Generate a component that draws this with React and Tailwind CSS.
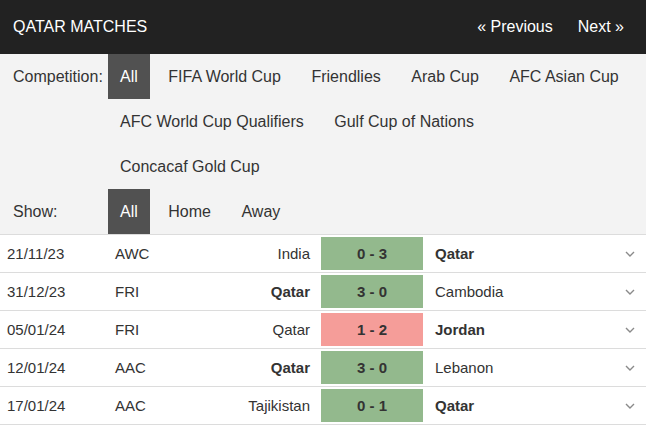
const competitions = [
  "All",
  "FIFA World Cup",
  "Friendlies",
  "Arab Cup",
  "AFC Asian Cup",
  "AFC World Cup Qualifiers",
  "Gulf Cup of Nations",
  "Concacaf Gold Cup",
]

const matches = [
  { date: "21/11/23", comp: "AWC", home: "India", away: "Qatar", score: "0 - 3", win: true, homeBold: false },
  { date: "31/12/23", comp: "FRI", home: "Qatar", away: "Cambodia", score: "3 - 0", win: true, homeBold: true },
  { date: "05/01/24", comp: "FRI", home: "Qatar", away: "Jordan", score: "1 - 2", win: false, homeBold: false },
  { date: "12/01/24", comp: "AAC", home: "Qatar", away: "Lebanon", score: "3 - 0", win: true, homeBold: true },
  { date: "17/01/24", comp: "AAC", home: "Tajikistan", away: "Qatar", score: "0 - 1", win: true, homeBold: false },
]

function FilterItem({ label, active }) {
  return (
    <span
      className={`flex h-[45px] items-center px-3 pt-[1px] ${
        active ? "bg-[#515151] text-white" : "text-[#333]"
      }`}
    >
      {label}
    </span>
  )
}

function Chevron() {
  return (
    <svg width="10" height="6" viewBox="0 0 10 6" fill="none">
      <polyline points="1,1 5,5 9,1" stroke="#8a8a8a" strokeWidth="1.4" />
    </svg>
  )
}

export default function App() {
  return (
    <div className="w-[646px] h-[426px] overflow-hidden bg-white font-['Liberation_Sans',Arial,sans-serif]">
      <header className="flex h-[54px] items-center justify-between bg-[#222] pl-[13px] pr-[22px] text-white">
        <span className="text-[16px]">QATAR MATCHES</span>
        <nav className="flex items-center gap-[25px] text-[16px]">
          <span>« Previous</span>
          <span>Next »</span>
        </nav>
      </header>

      <div className="bg-[#f3f3f3] text-[16px]">
        <div className="flex">
          <span className="flex h-[45px] w-[108px] shrink-0 items-center pl-[13px] pt-[1px] text-[#333]">Competition:</span>
          <div className="flex flex-wrap gap-x-[6.5px]">
            {competitions.map((c) => (
              <FilterItem key={c} label={c} active={c === "All"} />
            ))}
          </div>
        </div>
        <div className="flex">
          <span className="flex h-[45px] w-[108px] shrink-0 items-center pl-[13px] pt-[1px] text-[#333]">Show:</span>
          <div className="flex gap-x-[6.5px]">
            <FilterItem label="All" active />
            <FilterItem label="Home" />
            <FilterItem label="Away" />
          </div>
        </div>
      </div>

      <div className="border-t border-[#dcdcdc] text-[15px] text-[#333]">
        {matches.map((m) => (
          <div key={m.date} className="flex h-[38px] items-stretch border-b border-[#dcdcdc]">
            <span className="flex w-[108px] items-center pl-[7px] pt-[1px]">{m.date}</span>
            <span className="flex w-[100px] items-center pl-[7px] pt-[1px]">{m.comp}</span>
            <span className={`flex w-[111px] items-center justify-end pr-[9px] pt-[1px] ${m.homeBold ? "font-bold" : ""}`}>
              {m.home}
            </span>
            <span className="flex w-[106px] p-[2px]">
              <span
                className={`flex flex-1 items-center justify-center pt-[1px] font-bold text-[#333] ${
                  m.win ? "bg-[#93b98d]" : "bg-[#f59d99]"
                }`}
              >
                {m.score}
              </span>
            </span>
            <span className={`flex flex-1 items-center pl-[10px] pt-[1px] ${!m.homeBold ? "font-bold" : ""}`}>{m.away}</span>
            <span className="flex w-[32px] items-center justify-center">
              <Chevron />
            </span>
          </div>
        ))}
      </div>
    </div>
  )
}
